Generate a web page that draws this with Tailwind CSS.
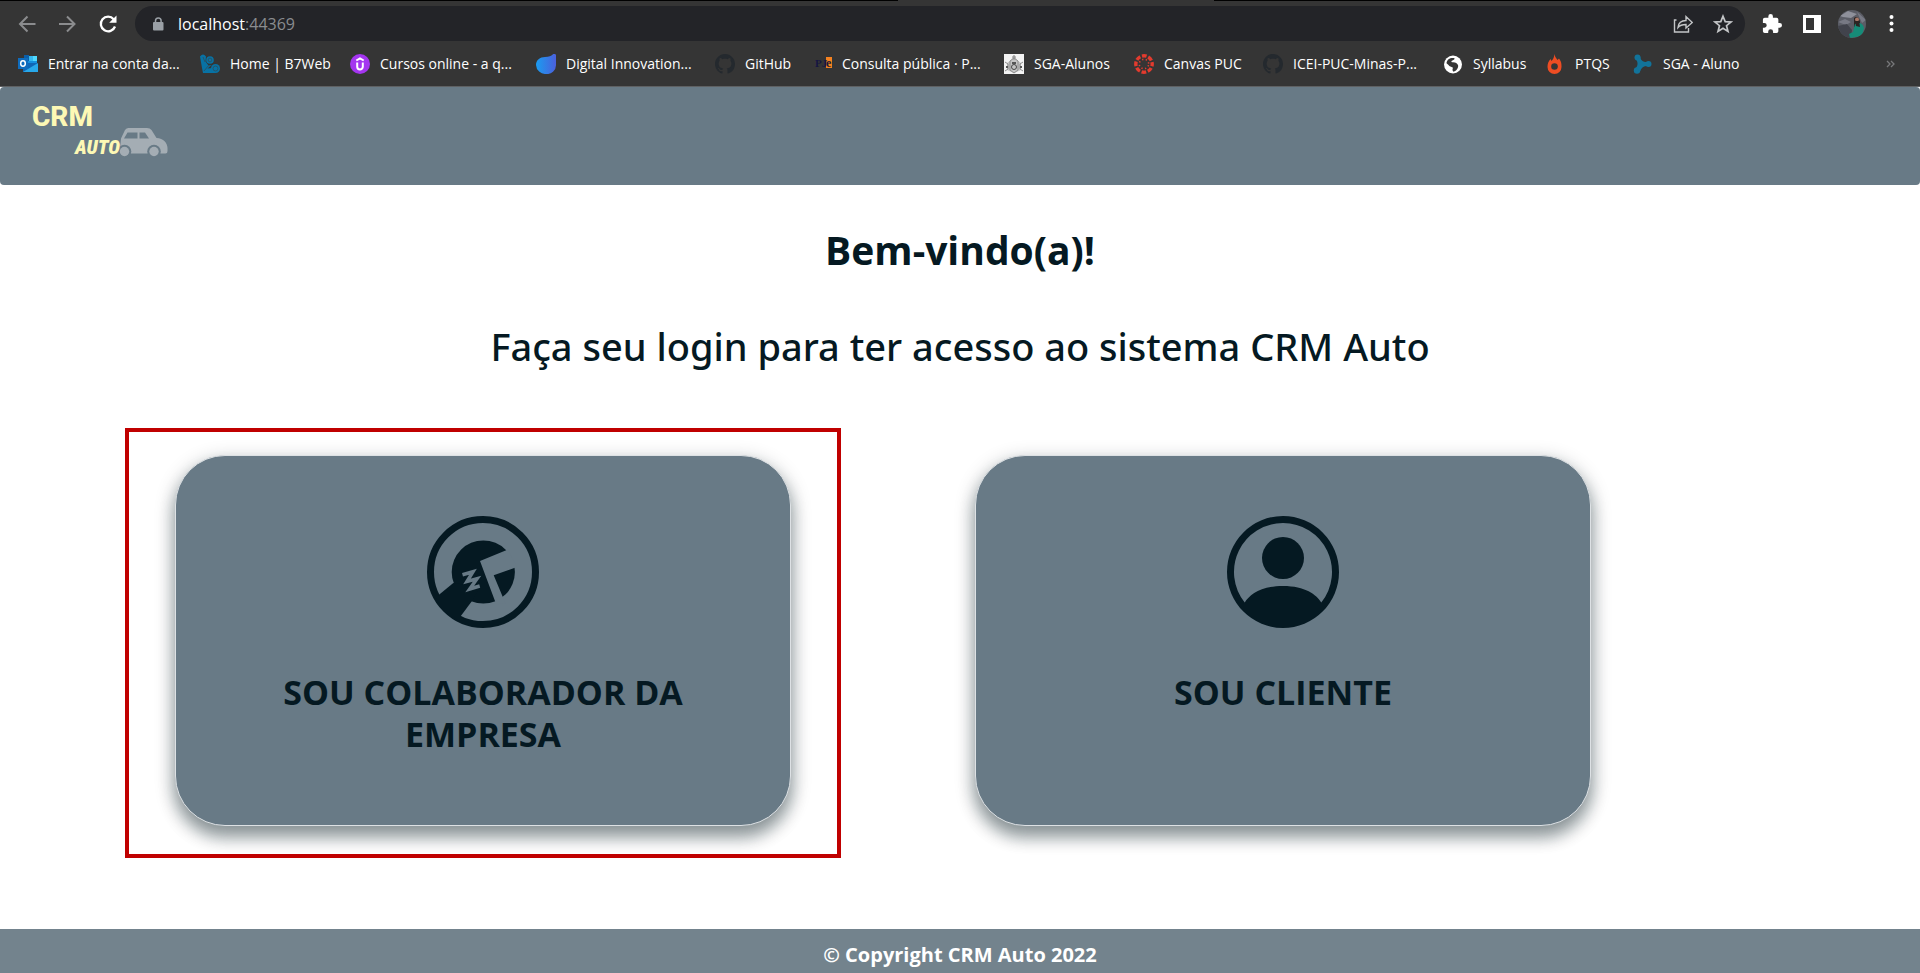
<!DOCTYPE html>
<html lang="pt-BR">
<head>
<meta charset="utf-8">
<meta name="viewport" content="width=device-width, initial-scale=1">
<title>CRM Auto</title>
<script src="https://cdn.jsdelivr.net/npm/@tailwindcss/browser@4"></script>
</head>
<body class="flex min-h-screen flex-col bg-white font-['Open_Sans','Noto_Sans',sans-serif] text-[#051922]">

<!-- Browser toolbar -->
<div class="flex flex-col border-b border-[#5f6163] bg-[#353535] text-white">
  <div class="flex h-px"><span class="w-[898px] bg-black"></span><span class="w-[316px]"></span><span class="flex-1 bg-black"></span></div>
  <div class="flex items-center pt-[5px] pr-[18px] pl-[17px]">
    <div class="flex w-[118px] gap-5">
      <button aria-label="Voltar" class="size-5"><svg class="size-5" viewBox="0 0 20 20" fill="none" stroke="#8b8c8e" stroke-width="2"><path d="M18.500 10H3.500M10.500 2.500L3 10l7.500 7.500"/></svg></button>
      <button aria-label="Avançar" class="size-5"><svg class="size-5" viewBox="0 0 20 20" fill="none" stroke="#8b8c8e" stroke-width="2"><path d="M2 10h15M10 2.500l7.500 7.500L10 17.500"/></svg></button>
      <button aria-label="Recarregar" class="size-5"><svg class="size-5" viewBox="0 0 20 20" fill="none" stroke="#fff" stroke-width="2.300"><path d="M18 12.500A7.300 7.300 0 1 1 16.700 5.300"/><path d="M19.500 1.500v7.300h-7.300z" fill="#fff" stroke="none"/></svg></button>
    </div>
    <div class="flex h-[35px] flex-1 items-center rounded-full bg-[#232428] pr-3 pl-4">
      <svg class="size-4" viewBox="0 0 16 16"><rect x="2" y="6" width="10.500" height="8.500" rx="1" fill="#9aa0a6"/><path d="M4.500 7V4.700a2.800 2.800 0 0 1 5.600 0V7" fill="none" stroke="#9aa0a6" stroke-width="1.500"/></svg>
      <span class="ml-[11px] flex-1 text-base leading-5">localhost<span class="text-[#8a8c8f]">:44369</span></span>
      <div class="flex gap-5">
        <button aria-label="Compartilhar" class="size-5"><svg class="size-5" viewBox="0 0 20 20" fill="none" stroke="#c3c5c7" stroke-width="1.400"><path d="M3.500 6H1.500v12h14v-4"/><path d="M5 13.500c.5-5 3.500-7 8-7V2.700L19.300 8.500 13 14v-3.500c-4 0-6 .5-8 3z"/></svg></button>
        <button aria-label="Favoritar" class="size-5"><svg class="size-5" viewBox="0 0 20 20" fill="none" stroke="#c3c5c7" stroke-width="1.700"><path d="M10 2.200l2.200 5.400 5.800.4-4.500 3.700 1.500 5.700-5-3.100-5 3.100 1.500-5.700L2 8l5.800-.4z"/></svg></button>
      </div>
    </div>
    <div class="ml-[17px] flex items-center">
      <button aria-label="Extensões" class="size-5"><svg class="size-5" viewBox="1 1 22 22" fill="#fff"><path d="M20.500 11H19V7a2 2 0 0 0-2-2h-4V3.500a2.500 2.500 0 0 0-5 0V5H4a2 2 0 0 0-2 2v3.800h1.500a2.700 2.700 0 0 1 0 5.400H2V20a2 2 0 0 0 2 2h3.800v-1.500a2.700 2.700 0 0 1 5.400 0V22H17a2 2 0 0 0 2-2v-4h1.500a2.500 2.500 0 0 0 0-5z"/></svg></button>
      <button aria-label="Painel lateral" class="ml-5 size-5"><svg class="size-5" viewBox="0 0 20 20"><path fill="#fff" fill-rule="evenodd" d="M1 1h18v18H1zM4 4v12h8V4z"/></svg></button>
      <button aria-label="Perfil" class="ml-4 size-7"><svg class="size-7" viewBox="0 0 28 28"><defs><clipPath id="av"><circle cx="14" cy="14" r="14"/></clipPath></defs><g clip-path="url(#av)"><path fill="#5b5d66" d="M0 0h28v28H0z"/><path fill="#8e909a" d="M2 6l8-5 9 3-6 4-8-1z"/><path fill="#777984" d="M19 2l9 8-4 3zM0 12l7-3 6 3-5 3z"/><path fill="#41434c" d="M0 16l9-2 5 6-1 8H0z"/><path fill="#2b2422" d="M16 8c3-3 7 0 6 9h-6z"/><circle cx="19" cy="9.500" r="2" fill="#a87868"/><path fill="#168c78" d="M17 14c4-2 8-1 9 4l-2 8-12 2-1-4 4-2z"/><path fill="#2b2422" d="M17 11l4 0 1 6-4-1z"/></g></svg></button>
      <button aria-label="Menu" class="ml-4 size-5"><svg class="size-5" viewBox="0 0 20 20" fill="#fff"><circle cx="9.500" cy="3" r="2"/><circle cx="9.500" cy="9.500" r="2"/><circle cx="9.500" cy="16" r="2"/></svg></button>
    </div>
  </div>

  <nav aria-label="Favoritos" class="flex h-[45px] items-center pr-6 pl-[18px] text-sm whitespace-nowrap">
    <a href="#" class="flex w-[182px] items-center gap-[10px]"><svg class="size-5" viewBox="0 0 20 20"><path fill="#1490df" d="M6 2h13v9H6z"/><path fill="#0a5ea8" d="M6 1h5v6H6z"/><path fill="#35b8f1" d="M11 2h4v5h-4z"/><path fill="#50d9ff" d="M15 2h4v5h-4z"/><path fill="#1066b5" d="M5 9h14v9H5z"/><path fill="#28a8ea" d="M5 18L20 9v9z"/><path fill="#0f6cbd" d="M0 4h10v11H0z"/><ellipse cx="5" cy="9.500" rx="2.300" ry="2.700" fill="none" stroke="#fff" stroke-width="1.500"/></svg>Entrar na conta da...</a>
    <a href="#" class="flex w-[150px] items-center gap-[10px]"><svg class="size-5" viewBox="0 0 20 20" fill="#0872a4"><path d="M0 2.500q3-4 6 0l-.5 5 3 4 3-.5-4 3.500 5-.5 3 5H3L2 14z"/><circle cx="10" cy="6" r="3.800"/><circle cx="15.500" cy="14.500" r="4.500"/><circle cx="10" cy="6" r="1.900" fill="none" stroke="#265468"/><circle cx="15.500" cy="14.500" r="2.500" fill="none" stroke="#265468"/><path d="M3 3l2 5M4 17l5-6" fill="none" stroke="#265468"/></svg>Home | B7Web</a>
    <a href="#" class="flex w-[186px] items-center gap-[10px]"><svg class="size-5" viewBox="0 0 20 20"><circle cx="10" cy="10" r="10" fill="#a435f0"/><path d="M7.200 8.500v4.200c0 3.600 5.600 3.600 5.600 0V8.500M6.300 6.500L10 4.300l3.700 2.200" fill="none" stroke="#fff" stroke-width="2"/></svg>Cursos online - a q...</a>
    <a href="#" class="flex w-[179px] items-center gap-[10px]"><svg class="size-5" viewBox="0 0 20 20"><defs><linearGradient id="dio"><stop stop-color="#1a9cf0"/><stop offset="1" stop-color="#4b60dc"/></linearGradient></defs><path fill="url(#dio)" d="M9 3C13 3 15 2 17 .3c1-.7 3-.5 3 1V11a9 9 0 0 1-10 9A9.500 9.500 0 0 1 0 11c0-5 4-8 9-8z"/></svg>Digital Innovation...</a>
    <a href="#" class="flex w-[99px] items-center gap-[10px]"><svg class="size-5" viewBox="0 0 16 16" fill="#24292e"><path d="M8 0C3.580 0 0 3.580 0 8c0 3.540 2.290 6.530 5.470 7.590.4.070.55-.17.55-.38 0-.19-.01-.82-.01-1.490-2.010.37-2.530-.49-2.690-.94-.09-.23-.48-.94-.82-1.130-.28-.15-.68-.52-.01-.53.63-.01 1.080.58 1.230.82.72 1.210 1.870.87 2.330.66.07-.52.28-.87.51-1.070-1.780-.2-3.640-.89-3.640-3.950 0-.87.31-1.590.82-2.150-.08-.2-.36-1.020.08-2.120 0 0 .67-.21 2.200.82.64-.18 1.320-.27 2-.27s1.360.09 2 .27c1.530-1.040 2.200-.82 2.200-.82.44 1.100.16 1.920.08 2.120.51.56.82 1.270.82 2.150 0 3.070-1.870 3.750-3.650 3.950.29.25.54.73.54 1.480 0 1.070-.01 1.930-.01 2.200 0 .21.15.46.55.38A8 8 0 0 0 16 8c0-4.420-3.580-8-8-8z"/></svg>GitHub</a>
    <a href="#" class="flex w-[190px] items-center gap-2"><svg class="size-5" viewBox="0 0 20 20" font-family="Liberation Serif" font-weight="700"><path fill="#f58220" d="M12 3h6v11h-6z"/><text x="1" y="13" font-size="11" fill="#151642">PJ</text><text x="12" y="13" font-size="12" fill="#201638">e</text></svg>Consulta pública · P...</a>
    <a href="#" class="flex w-[130px] items-center gap-[10px]"><svg class="size-5" viewBox="0 0 20 20"><path fill="#f3f3f3" d="M0 0h20v20H0z"/><path fill="#c4c4c4" d="M7 6l3-5 3 5 4 3v7l-7 3-7-3V9z"/><g fill="none" stroke="#8c8c8c"><path d="M10 1v5M8 3h4M6 7l4-3 4 3v9l-4 3-4-3zM1 8l3 2v5l-3 2M19 8l-3 2v5l3 2"/><circle cx="10" cy="13" r="2.500" stroke="#444"/></g><path fill="#555" d="M8 8h4v2H8zM2 12h2v2H2zM16 12h2v2h-2z"/></svg>SGA-Alunos</a>
    <a href="#" class="flex w-[129px] items-center gap-[10px]"><svg class="size-5" viewBox="0 0 20 20" fill="none" stroke="#e33b2e"><circle cx="10" cy="10" r="8.200" stroke-width="3.400" stroke-dasharray="4.700 1.740" stroke-dashoffset="2.300"/><circle cx="10" cy="10" r="4.700" stroke-width="1.600" stroke-dasharray="1.300 2.390" stroke-dashoffset="2.500"/></svg>Canvas PUC</a>
    <a href="#" class="flex w-[180px] items-center gap-[10px]"><svg class="size-5" viewBox="0 0 16 16" fill="#24292e"><path d="M8 0C3.580 0 0 3.580 0 8c0 3.540 2.290 6.530 5.470 7.590.4.070.55-.17.55-.38 0-.19-.01-.82-.01-1.490-2.010.37-2.530-.49-2.690-.94-.09-.23-.48-.94-.82-1.130-.28-.15-.68-.52-.01-.53.63-.01 1.080.58 1.230.82.72 1.210 1.870.87 2.330.66.07-.52.28-.87.51-1.070-1.780-.2-3.640-.89-3.640-3.950 0-.87.31-1.590.82-2.150-.08-.2-.36-1.020.08-2.120 0 0 .67-.21 2.200.82.64-.18 1.320-.27 2-.27s1.360.09 2 .27c1.530-1.040 2.200-.82 2.200-.82.44 1.100.16 1.920.08 2.120.51.56.82 1.270.82 2.150 0 3.070-1.870 3.750-3.650 3.950.29.25.54.73.54 1.480 0 1.070-.01 1.930-.01 2.200 0 .21.15.46.55.38A8 8 0 0 0 16 8c0-4.420-3.580-8-8-8z"/></svg>ICEI-PUC-Minas-P...</a>
    <a href="#" class="flex w-[102px] items-center gap-[10px]"><svg class="size-5" viewBox="0 0 20 20"><circle cx="10" cy="10.500" r="9" fill="#fff"/><path fill="#353535" d="M3.500 9C4 5.500 7 3.500 11 4c1.500 1-.5 2-1.500 2.500-2 1-1 1.800.5 1.800 3 0 4 1.200 5 2.700.8 2.500-1.500 6-4.500 6.700-1.500-1-1-3-.5-4-2-1-3.500-1-4.500-2.700C4.800 10.300 4 10 3.500 9z"/></svg>Syllabus</a>
    <a href="#" class="flex w-[88px] items-center gap-[10px]"><svg class="size-5" viewBox="0 0 20 20"><path fill="#ee4d23" d="M9.500 0c.3 2.500 1.500 4 3 6l1.500-1.500c2.500 3 2.500 5.500 2.500 8.500a7 7 0 0 1-14 0c0-4 1-5.500 3-8l1 2c2-2 2.500-4 3-7z"/><circle cx="9.500" cy="12.500" r="3.300" fill="#353535"/></svg>PTQS</a>
    <a href="#" class="flex items-center gap-[10px]"><svg class="size-5" viewBox="0 0 20 20" fill="#12739a"><circle cx="4.500" cy="3.500" r="3"/><circle cx="4" cy="16.500" r="3.200"/><circle cx="15.500" cy="10" r="3"/><path d="M7.300 2.500c0 3.500 2.700 6 8.200 5.500v4c-4-.5-7 1-8.500 5.500L3 14c2-3 2-5 .5-8z"/></svg>SGA - Aluno</a>
    <button aria-label="Mais favoritos" class="ml-auto"><svg class="h-3 w-[10px]" viewBox="0 0 10 12" fill="none" stroke="#77787a" stroke-width="1.300"><path d="M1 3l3 3-3 3M5 3l3 3-3 3"/></svg></button>
  </nav>
</div>

<header class="flex h-[98px] items-start rounded bg-[#687a86] pt-2 pl-[30px]">
  <a href="#" aria-label="CRM Auto">
    <svg class="h-16 w-[140px]" viewBox="0 -8 140 64">
      <path fill="#a4adb4" fill-rule="evenodd" d="M95 27q1.500-2 3.500-2H117q3 0 4.500 2l5 8c7 .5 11 5 11 10v3q0 2.500-2 2.500H91q-1.500-1-1-4l1-11zM94 35.500h13.500v-6H97.500zM109.500 29.500v6h9.500l-4-6z"/>
      <g fill="#687a86"><circle cx="94.500" cy="48.500" r="6.800"/><circle cx="124" cy="48.500" r="6.800"/></g>
      <g fill="#a4adb4"><circle cx="94.500" cy="48.500" r="4.700"/><circle cx="124" cy="48.500" r="4.700"/></g>
      <text x="2" y="23" font-family="Roboto" font-weight="800" font-size="28" fill="#fdf8b5">CRM</text>
      <text x="45" y="51" font-family="Roboto Condensed, Roboto, sans-serif" font-weight="900" font-style="italic" font-size="20" fill="#fdf8b5">AUTO</text>
    </svg>
  </a>
</header>

<main class="flex flex-1 flex-col pt-[35px]">
  <h1 class="text-center text-[39px] leading-[60px] font-bold">Bem-vindo(a)!</h1>
  <h2 class="mt-9 text-center font-['Noto_Sans','Open_Sans',sans-serif] text-[38px] leading-[60px] font-medium">Faça seu login para ter acesso ao sistema CRM Auto</h2>
  <div class="mt-[79px] mr-[237px] mb-[103px] ml-[83px] grid flex-1 grid-cols-2 justify-items-center">
    <div class="relative flex w-[77%]">
      <a href="#" class="flex flex-1 flex-col items-center rounded-[50px] border border-[#dde1e4] bg-[#687a86] px-20 pt-[60px] text-center shadow-[0_12px_16px_rgba(5,25,34,0.3),0_6px_20px_rgba(5,25,34,0.3)]">
        <svg class="size-28" viewBox="0 0 112 112" fill="#051922">
          <circle cx="56" cy="56" r="52.500" fill="none" stroke="#051922" stroke-width="7"/>
          <circle cx="56.300" cy="56" r="31.600"/>
          <path d="M26.300 67L12 78.700l-3 4L30 104l4-4.300L45 85l8-14z"/>
          <path fill="#687a86" d="M81 33.500L53 45l16.300 43.500 9-1.500-11.600-27.700L90 51z"/>
          <path d="M35.500 58.700l10.500-3-6 9.800 10-2.700-7.300 10.200 10-3" fill="none" stroke="#687a86" stroke-width="3.500"/>
        </svg>
        <span class="mt-[43px] text-[34px] leading-[42px] font-bold">SOU COLABORADOR DA EMPRESA</span>
      </a>
      <div class="pointer-events-none absolute -top-[27px] -right-[50px] -bottom-8 -left-[50px] border-4 border-[#c00000]"></div>
    </div>
    <a href="#" class="flex w-[77%] flex-col items-center rounded-[50px] border border-[#dde1e4] bg-[#687a86] px-20 pt-[60px] text-center shadow-[0_12px_16px_rgba(5,25,34,0.3),0_6px_20px_rgba(5,25,34,0.3)]">
      <svg class="size-28" viewBox="0 0 16 16" fill="#051922"><path d="M11 6a3 3 0 1 1-6 0 3 3 0 0 1 6 0z"/><path fill-rule="evenodd" d="M0 8a8 8 0 1 1 16 0A8 8 0 0 1 0 8zm8-7a7 7 0 0 0-5.468 11.370C3.242 11.226 4.805 10 8 10s4.757 1.225 5.468 2.370A7 7 0 0 0 8 1z"/></svg>
      <span class="mt-[43px] text-[34px] leading-[42px] font-bold">SOU CLIENTE</span>
    </a>
  </div>
</main>

<footer class="bg-[#73838d] pt-[14px] pb-[6px] text-center text-xl leading-6 font-bold text-white">© Copyright CRM Auto 2022</footer>
</body>
</html>
